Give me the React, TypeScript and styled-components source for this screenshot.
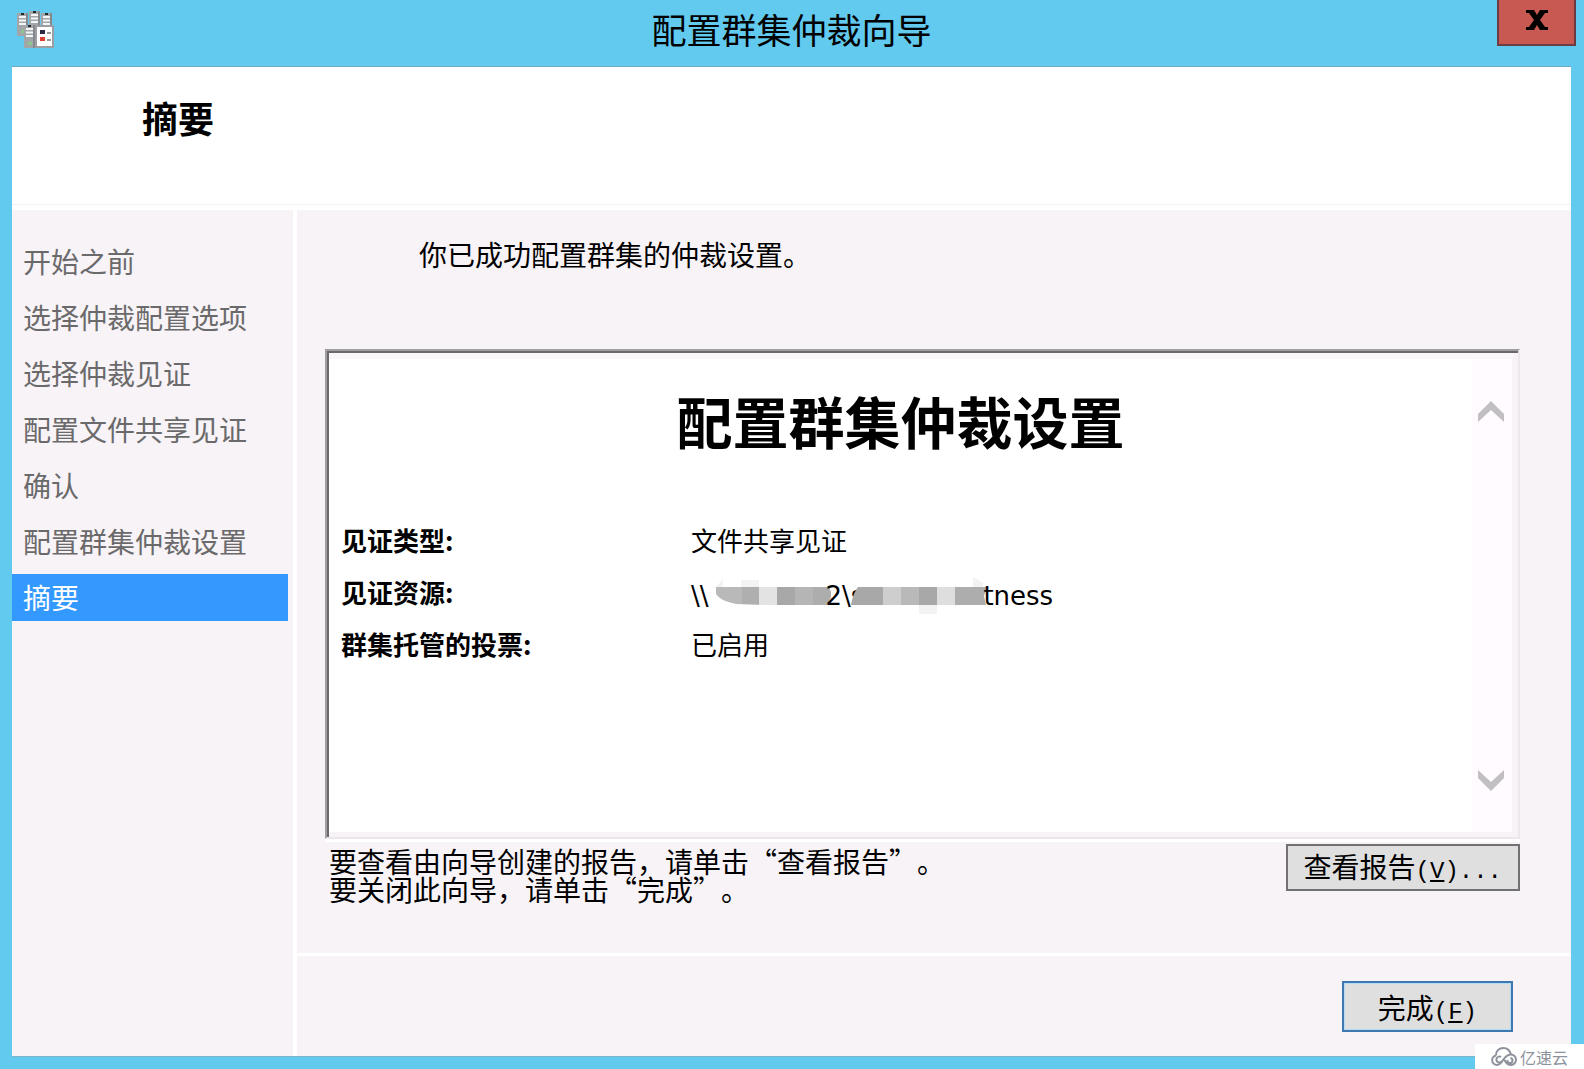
import React from "react";
import styled, { createGlobalStyle, css } from "styled-components";

const sans = `"Noto Sans CJK SC", "Noto Sans", sans-serif`;

const GlobalStyle = createGlobalStyle`
  *, *::before, *::after { box-sizing: border-box; }
  body { margin: 0; background: #62c9ef; color: #000; font-family: ${sans}; }
  h1, h2, p, ol, dl, dd { margin: 0; padding: 0; }
  button { font-family: inherit; }
`;

const Window = styled.div`
  display: flex;
  flex-direction: column;
  min-height: 100vh;
  padding: 0 13px 12px 12px;
  background: #62c9ef;
`;

const TitleBar = styled.header`
  display: grid;
  grid-template-columns: 74px 1fr 74px;
  height: 66px;
`;

const AppIcon = styled.svg`
  width: 40px;
  height: 40px;
  margin: 9px 0 0 4px;
`;

const WindowTitle = styled.h1`
  font-size: 35px;
  line-height: 58px;
  font-weight: 400;
  text-align: center;
`;

const CloseButton = styled.button`
  display: flex;
  align-items: center;
  justify-content: center;
  height: 46px;
  margin-right: -5px;
  padding: 0 0 4px;
  border: 2px solid #6b3c42;
  border-top: 0;
  background: #c75952;
`;

const Frame = styled.main`
  flex: 1;
  display: flex;
  flex-direction: column;
  border-top: 1px solid #6fa9c6;
  border-bottom: 1px solid #7fb4cc;
  background: #fff;
`;

const PageHeader = styled.div`
  height: 138px;
  padding: 22px 130px;
  border-bottom: 1px solid #f3f1f3;
`;

const PageTitle = styled.h2`
  font-size: 36px;
  line-height: 56px;
  font-weight: 700;
`;

const Body = styled.div`
  flex: 1;
  display: grid;
  grid-template-columns: 281px 1fr;
  column-gap: 4px;
  margin-top: 5px;
`;

const Steps = styled.ol`
  display: flex;
  flex-direction: column;
  gap: 9px;
  padding: 28px 5px 0 0;
  list-style: none;
  background: #f7f3f7;
`;

const Step = styled.li<{ $current?: boolean }>`
  padding-left: 11px;
  font-size: 28px;
  line-height: 47px;
  color: #6b6a6b;
  ${(p) => p.$current && css`background: #3399ff; color: #fff;`}
`;

const Content = styled.div`
  display: flex;
  flex-direction: column;
  gap: 3px;
`;

const Summary = styled.section`
  flex: 1;
  display: flex;
  flex-direction: column;
  padding: 24px 51px 0 28px;
  background: #f7f3f7;
`;

const Message = styled.p`
  padding-left: 94px;
  font-size: 28px;
  line-height: 40px;
`;

const Report = styled.div`
  display: flex;
  min-height: 490px;
  margin-top: 75px;
  padding: 2px 0 0 2px;
  border: 2px solid;
  border-color: #a09ea0 #ebe7eb #ebe7eb #a09ea0;
  background: #fff;
  box-shadow: 0 3px 0 #fff, inset 2px 2px 0 #6b696b, inset -5px -5px 0 #f7f3f7, inset 0 8px 0 #faf7fa;
`;

const ReportBody = styled.div`
  flex: 1;
  padding: 27px 12px 0;
`;

const ReportTitle = styled.h2`
  font-size: 56px;
  line-height: 80px;
  font-weight: 700;
  text-align: center;
`;

const Facts = styled.dl`
  display: grid;
  grid-template-columns: 350px 1fr;
  grid-auto-rows: 40px;
  row-gap: 12px;
  margin-top: 60px;
  font-size: 26px;
  line-height: 40px;
`;

const Term = styled.dt`
  font-weight: 700;
`;

const Path = styled.dd`
  display: flex;
  align-items: center;
  padding-top: 8px;
  font-family: "DejaVu Sans", sans-serif;
  line-height: 32px;
`;

const Redaction = styled.svg<{ $before: number; $after: number }>`
  display: block;
  flex: none;
  height: 36px;
  margin: 0 ${(p) => p.$after}px 0 ${(p) => p.$before}px;
`;

const ScrollTrack = styled.div`
  display: flex;
  flex-direction: column;
  justify-content: space-between;
  width: 46px;
  margin: 6px 0 5px;
  padding: 42px 14px 41px 6px;
  background: linear-gradient(to right, #fffbff 40px, #f7f3f7 40px);
`;

const ScrollButton = styled.button`
  display: flex;
  justify-content: center;
  padding: 0;
  border: 0;
  background: none;
`;

const Closing = styled.div`
  display: flex;
  justify-content: space-between;
  align-items: flex-start;
  padding-top: 5px;
`;

const Hint = styled.p`
  padding: 3px 0 0 4px;
  font-size: 28px;
  line-height: 28px;
  text-spacing-trim: space-all;
`;

const PushButton = styled.button<{ $primary?: boolean }>`
  height: 47px;
  padding: 0 16px 4px;
  border: 2px solid #727072;
  background: #dfdfdf;
  color: #000;
  font-size: 28px;
  line-height: 40px;
  white-space: nowrap;
  ${(p) =>
    p.$primary &&
    css`
      height: 51px;
      padding: 0 34px;
      border-color: #3f78ae;
      box-shadow: inset 0 0 0 1px #b5dcf5;
    `}
`;

const Latin = styled.span`
  font-family: "Liberation Mono", monospace;
  font-size: 24px;
  line-height: 24px;
`;

const Footer = styled.footer`
  display: flex;
  justify-content: flex-end;
  padding: 25px 58px 24px;
  background: #f7f3f7;
`;

const Watermark = styled.div`
  position: fixed;
  right: 0;
  bottom: 0;
  display: flex;
  align-items: center;
  gap: 3px;
  height: 25px;
  padding: 0 16px;
  background: #fff;
  color: #8d929c;
  font-size: 16px;
  line-height: 24px;
`;

const steps = [
  "开始之前",
  "选择仲裁配置选项",
  "选择仲裁见证",
  "配置文件共享见证",
  "确认",
  "配置群集仲裁设置",
  "摘要",
];

function Server({ x, y }: { x: number; y: number }) {
  return (
    <g transform={`translate(${x} ${y})`}>
      <rect width="11" height="23" fill="#a3a6a9" />
      <rect x="9" width="2" height="23" fill="#85898d" />
      <path d="M2 4h7M2 7.500h7M2 11h7" stroke="#f4f5f6" strokeWidth="2" />
      <path d="M4 1h3" stroke="#222a30" strokeWidth="2" />
      <rect x="4" y="17" width="4" height="3" fill="#8ac98a" />
    </g>
  );
}

function ClusterIcon() {
  return (
    <AppIcon viewBox="0 0 40 40" aria-hidden="true">
      <Server x={1} y={4} />
      <Server x={13} y={2} />
      <Server x={25} y={4} />
      <Server x={8} y={16} />
      <rect x="20" y="17" width="17" height="21" fill="#fff" stroke="#9b9fa3" strokeWidth="2" />
      <rect x="24" y="21" width="5" height="4" fill="#2b2540" />
      <rect x="24" y="28" width="5" height="4" fill="#dc4034" />
      <path d="M31 24h4M31 31h4" stroke="#777" strokeWidth="1.500" />
    </AppIcon>
  );
}

interface Block {
  width: number;
  color: string;
}

const hostBlocks: Block[] = [
  { width: 26, color: "#b9b9b9" },
  { width: 17, color: "#afafaf" },
  { width: 18, color: "#e3e3e3" },
  { width: 18, color: "#a8a8a8" },
  { width: 18, color: "#b5b5b5" },
  { width: 18, color: "#adadad" },
];

const shareBlocks: Block[] = [
  { width: 32, color: "#a8a8a8" },
  { width: 18, color: "#cecece" },
  { width: 18, color: "#b9b9b9" },
  { width: 18, color: "#a8a8a8" },
  { width: 18, color: "#dedede" },
  { width: 32, color: "#adadad" },
];

interface MosaicProps {
  id: string;
  blocks: Block[];
  outline: string;
  before: number;
  after: number;
  children?: React.ReactNode;
}

function Mosaic({ id, blocks, outline, before, after, children }: MosaicProps) {
  const total = blocks.reduce((sum, b) => sum + b.width, 0);
  let x = 0;
  return (
    <Redaction
      $before={before}
      $after={after}
      width={total}
      viewBox={`0 0 ${total} 36`}
      aria-label="已隐藏"
    >
      <clipPath id={id}>
        <path d={outline} />
      </clipPath>
      {children}
      <g clipPath={`url(#${id})`}>
        {blocks.map((b, i) => {
          const left = x;
          x += b.width;
          return <rect key={i} x={left} y="9" width={b.width} height="18" fill={b.color} />;
        })}
      </g>
    </Redaction>
  );
}

export default function App() {
  return (
    <Window>
      <GlobalStyle />
      <TitleBar>
        <ClusterIcon />
        <WindowTitle>配置群集仲裁向导</WindowTitle>
        <CloseButton aria-label="关闭">
          <svg width="22" height="20" viewBox="0 0 22 20" aria-hidden="true">
            <path d="M0 0h8l3 5 3-5h8v3h-3l-5 7 5 7h3v3h-8l-3-5-3 5H0v-3h3l5-7-5-7H0z" />
          </svg>
        </CloseButton>
      </TitleBar>
      <Frame>
        <PageHeader>
          <PageTitle>摘要</PageTitle>
        </PageHeader>
        <Body>
          <Steps>
            {steps.map((name) => (
              <Step key={name} $current={name === "摘要"}>
                {name}
              </Step>
            ))}
          </Steps>
          <Content>
            <Summary>
              <Message>你已成功配置群集的仲裁设置。</Message>
              <Report>
                <ReportBody>
                  <ReportTitle>配置群集仲裁设置</ReportTitle>
                  <Facts>
                    <Term>见证类型:</Term>
                    <dd>文件共享见证</dd>
                    <Term>见证资源:</Term>
                    <Path>
                      {"\\\\"}
                      <Mosaic
                        id="host-mask"
                        blocks={hostBlocks}
                        outline="M0 9H113L115 14V19L111 27H50L20 26Q4 23 0 16Z"
                        before={7}
                        after={-5}
                      >
                        <path d="M0 9L7 1V9ZM25 2h18v7H25z" fill="#f3f3f3" />
                      </Mosaic>
                      {"2\\s"}
                      <Mosaic
                        id="share-mask"
                        blocks={shareBlocks}
                        outline="M7 9H136L133 18L135 27H0Q2 15 7 9Z"
                        before={-13}
                        after={-4}
                      >
                        <path d="M122 9V-2L132 5V9ZM68 27h18v9H68z" fill="#f3f3f3" />
                      </Mosaic>
                      tness
                    </Path>
                    <Term>群集托管的投票:</Term>
                    <dd>已启用</dd>
                  </Facts>
                </ReportBody>
                <ScrollTrack>
                  <ScrollButton aria-label="向上滚动">
                    <svg width="26" height="21" viewBox="0 0 26 21" aria-hidden="true">
                      <path d="M0 13L13 0l13 13v8L13 9 0 21z" fill="#c2bfc2" />
                    </svg>
                  </ScrollButton>
                  <ScrollButton aria-label="向下滚动">
                    <svg width="26" height="21" viewBox="0 0 26 21" aria-hidden="true">
                      <path d="M0 8l13 13L26 8V0L13 12 0 0z" fill="#c2bfc2" />
                    </svg>
                  </ScrollButton>
                </ScrollTrack>
              </Report>
              <Closing>
                <Hint>
                  要查看由向导创建的报告，请单击“查看报告”。
                  <br />
                  要关闭此向导，请单击“完成”。
                </Hint>
                <PushButton>
                  查看报告<Latin>(<u>V</u>)...</Latin>
                </PushButton>
              </Closing>
            </Summary>
            <Footer>
              <PushButton $primary>
                完成<Latin>(<u>F</u>)</Latin>
              </PushButton>
            </Footer>
          </Content>
        </Body>
      </Frame>
      <Watermark>
        <svg width="26" height="19" viewBox="0 0 26 19" fill="none" stroke="#8d929c" strokeWidth="2" aria-hidden="true">
          <path d="M5 8.500C5 4 8 1 12.500 1S19 4 20 7.500" />
          <path d="M5 8.500A4.800 4.800 0 0 0 6 18c6 0 6-10 13.500-10.500A5.200 5.200 0 0 1 20 18c-3 0-5-2-6.500-5" />
          <path d="M11 14a3 3 0 1 1-1-4M16.500 13a2.500 2.500 0 1 0 3-2" />
        </svg>
        亿速云
      </Watermark>
    </Window>
  );
}
